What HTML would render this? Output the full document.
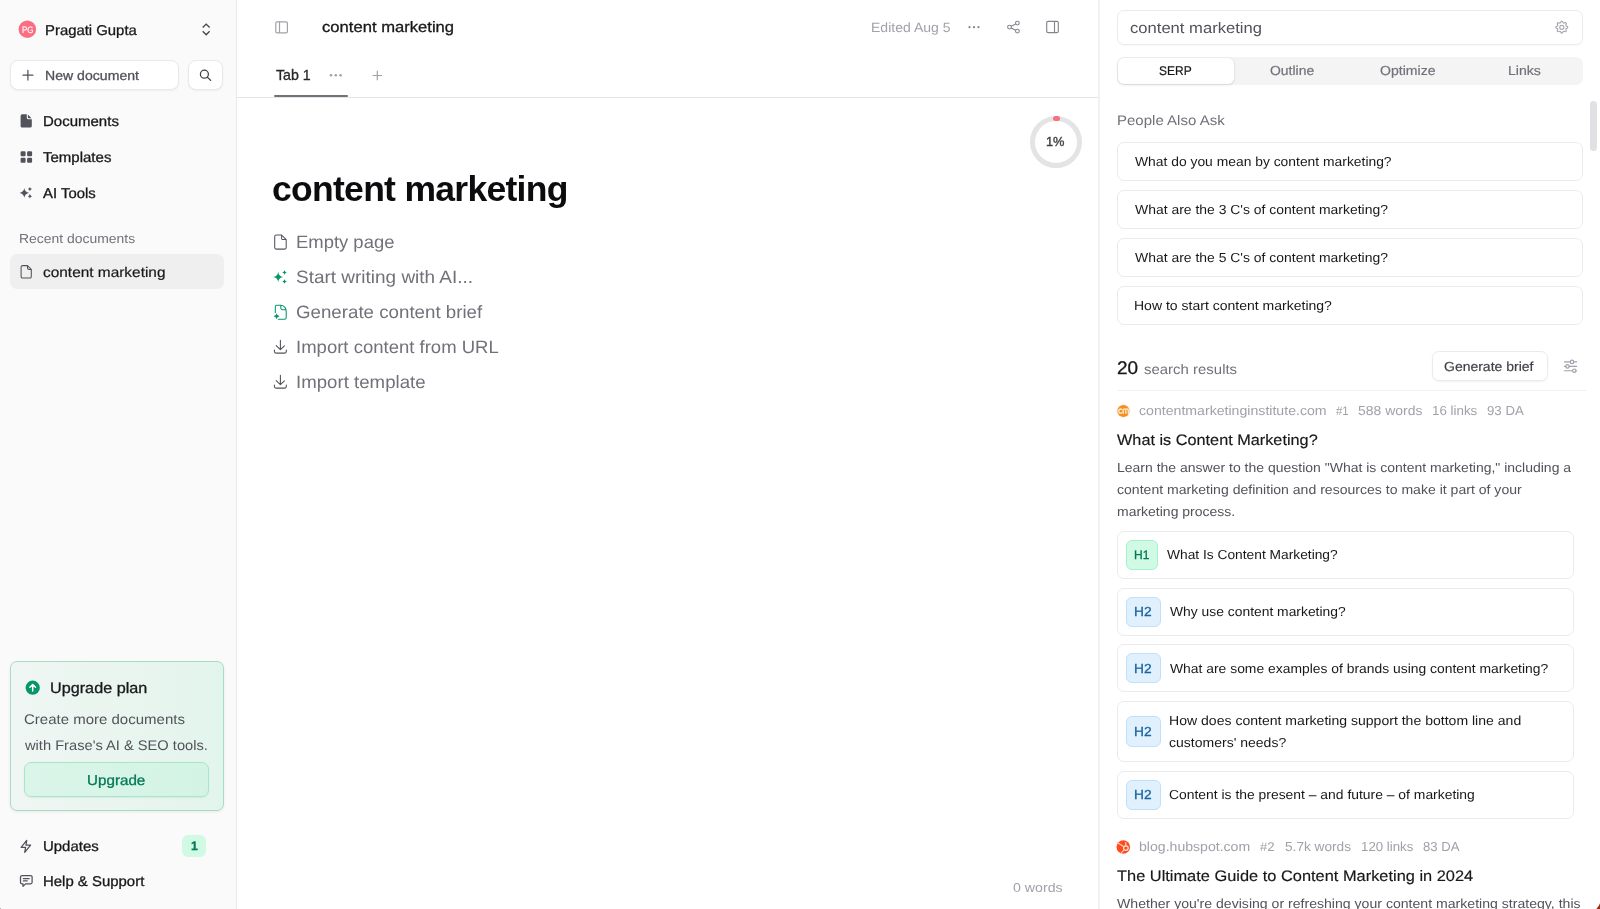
<!DOCTYPE html>
<html><head><meta charset="utf-8"><title>content marketing</title>
<style>
html,body{margin:0;padding:0;}
body{width:1600px;height:909px;overflow:hidden;background:#fff;position:relative;font-family:"Liberation Sans",sans-serif;}
.t{position:absolute;white-space:nowrap;line-height:20px;transform-origin:0 50%;}
.b{position:absolute;box-sizing:border-box;}
#ic{position:absolute;left:0;top:0;}
</style></head><body>
<div id="root" style="position:absolute;left:0;top:0;width:1600px;height:909px;overflow:hidden;will-change:transform;">
<div class="b" style="left:0px;top:0px;width:237px;height:909px;background:#fafafa;border-right:1px solid #e9e9ec;"></div>
<div class="b" style="left:10px;top:60px;width:169px;height:30px;background:#fff;border:1px solid #e9e9ec;border-radius:8px;box-shadow:0 1px 2px rgba(0,0,0,.05);"></div>
<div class="b" style="left:188px;top:60px;width:35px;height:30px;background:#fff;border:1px solid #e9e9ec;border-radius:8px;box-shadow:0 1px 2px rgba(0,0,0,.05);"></div>
<div class="b" style="left:10px;top:254px;width:213.5px;height:35px;background:#efefef;border-radius:7px;"></div>
<div class="b" style="left:10px;top:661px;width:214px;height:150px;border:1px solid #a7dcc5;border-radius:7px;background:linear-gradient(90deg,#eff6f3 0%,#e9f5ef 55%,#e2f5ec 100%);box-shadow:0 1px 3px rgba(0,0,0,.07);"></div>
<div class="b" style="left:24px;top:762px;width:185.3px;height:35px;border:1px solid #a7e6cb;border-radius:7px;background:linear-gradient(90deg,#dbf5e9 0%,#d3f4e4 100%);box-shadow:0 1px 2px rgba(0,0,0,.06);"></div>
<div class="b" style="left:182px;top:835px;width:24px;height:22px;border-radius:6px;background:#d1fae5;"></div>
<div class="b" style="left:237px;top:97px;width:861px;height:1px;background:#e4e4e7;"></div>
<div class="b" style="left:274px;top:94.6px;width:73.5px;height:2.4px;background:#71717a;border-radius:1.2px;"></div>
<div class="b" style="left:1029.8px;top:115.8px;width:52.2px;height:52.2px;border-radius:50%;border:5px solid #e4e4e7;"></div>
<div class="b" style="left:1053px;top:115.6px;width:6.6px;height:5px;border-radius:2.5px;background:#fb6f7c;"></div>
<div class="b" style="left:1098px;top:0px;width:2px;height:909px;background:#f1f1f3;"></div>
<div class="b" style="left:1117px;top:10px;width:465.5px;height:34.5px;border:1px solid #ebebee;border-radius:7px;background:#fff;box-shadow:0 1px 2px rgba(0,0,0,.03);"></div>
<div class="b" style="left:1117px;top:57px;width:465.8px;height:28px;border-radius:7px;background:#f4f4f5;"></div>
<div class="b" style="left:1118px;top:58px;width:116.4px;height:26px;border-radius:6px;background:#fff;box-shadow:0 0 0 1px rgba(0,0,0,.025),0 1px 3px rgba(0,0,0,.11);"></div>
<div class="b" style="left:1590px;top:101px;width:7px;height:50px;border-radius:3.5px;background:#e1e1e5;"></div>
<div class="b" style="left:1117px;top:142px;width:465.5px;height:38.5px;border:1px solid #ebebee;border-radius:7px;background:#fff;"></div>
<div class="b" style="left:1117px;top:190px;width:465.5px;height:38.5px;border:1px solid #ebebee;border-radius:7px;background:#fff;"></div>
<div class="b" style="left:1117px;top:238px;width:465.5px;height:38.5px;border:1px solid #ebebee;border-radius:7px;background:#fff;"></div>
<div class="b" style="left:1117px;top:286px;width:465.5px;height:38.5px;border:1px solid #ebebee;border-radius:7px;background:#fff;"></div>
<div class="b" style="left:1432px;top:351px;width:115.6px;height:30px;border:1px solid #ebebee;border-radius:7px;background:#fff;box-shadow:0 1px 2px rgba(0,0,0,.06);"></div>
<div class="b" style="left:1117px;top:390px;width:470px;height:1px;background:#f1f1f3;"></div>
<div class="b" style="left:1117px;top:531px;width:456.6px;height:48px;border:1px solid #ebebee;border-radius:7px;background:#fff;"></div>
<div class="b" style="left:1126px;top:540.2px;width:32px;height:29.6px;border-radius:6px;background:#d1fae5;border:1px solid #a7f0cf;"></div>
<div class="b" style="left:1117px;top:588px;width:456.6px;height:48px;border:1px solid #ebebee;border-radius:7px;background:#fff;"></div>
<div class="b" style="left:1126px;top:596.5px;width:34.6px;height:30px;border-radius:6px;background:#e0f1fd;border:1px solid #bfe0f8;"></div>
<div class="b" style="left:1117px;top:644px;width:456.6px;height:48px;border:1px solid #ebebee;border-radius:7px;background:#fff;"></div>
<div class="b" style="left:1126px;top:653.4px;width:34.6px;height:30px;border-radius:6px;background:#e0f1fd;border:1px solid #bfe0f8;"></div>
<div class="b" style="left:1117px;top:701px;width:456.6px;height:61px;border:1px solid #ebebee;border-radius:7px;background:#fff;"></div>
<div class="b" style="left:1126px;top:716.4px;width:34.6px;height:30.4px;border-radius:6px;background:#e0f1fd;border:1px solid #bfe0f8;"></div>
<div class="b" style="left:1117px;top:771px;width:456.6px;height:48px;border:1px solid #ebebee;border-radius:7px;background:#fff;"></div>
<div class="b" style="left:1126px;top:779.6px;width:34.6px;height:30.4px;border-radius:6px;background:#e0f1fd;border:1px solid #bfe0f8;"></div>
<svg id="ic" width="1600" height="909" viewBox="0 0 1600 909">
<circle cx="27.350" cy="29.150" r="8.750" fill="#fa6e82"/>
<path d="M202.7 27.5L206.2 24.1L209.6 27.5M202.7 31.3L206.2 34.8L209.600 31.3" fill="none" stroke="#45454f" stroke-width="1.350" stroke-linejoin="miter"/>
<path d="M27.900 70.300v9.800M23 75.200h9.900" fill="none" stroke="#52525b" stroke-width="1.250" stroke-linecap="round"/>
<circle cx="204.400" cy="74.150" r="4" fill="none" stroke="#3f3f46" stroke-width="1.250"/><path d="M207.300 77.100L210.700 80.400" stroke="#3f3f46" stroke-width="1.300" stroke-linecap="round"/>
<path fill="#52525b" d="M22.200000000000003 114.3h4.600v3.400a1.600 1.600 0 0 0 1.600 1.600h3.400v6.600a1.600 1.600 0 0 1 -1.600 1.600H22.200000000000003a1.600 1.600 0 0 1 -1.600 -1.600V115.89999999999999a1.600 1.600 0 0 1 1.600 -1.600zM27.900000000000002 114.6L31.5 118.2H28.700000000000003a.800 .800 0 0 1 -.800 -.800z"/>
<rect x="20.6" y="151.3" width="5" height="5" rx="1.100" fill="#52525b"/>
<rect x="20.6" y="157.8" width="5" height="5" rx="1.100" fill="#52525b"/>
<rect x="27.1" y="151.3" width="5" height="5" rx="1.100" fill="#52525b"/>
<rect x="27.1" y="157.8" width="5" height="5" rx="1.100" fill="#52525b"/>
<path fill="#52525b" d="M24.30 188.10Q24.88 192.32 29.10 192.90Q24.88 193.48 24.30 197.70Q23.72 193.48 19.50 192.90Q23.72 192.32 24.30 188.10ZM29.90 187.00Q30.32 188.68 32.00 189.10Q30.32 189.52 29.90 191.20Q29.48 189.52 27.80 189.10Q29.48 188.68 29.90 187.00ZM29.90 194.10Q30.34 195.86 32.10 196.30Q30.34 196.74 29.90 198.50Q29.46 196.74 27.70 196.30Q29.46 195.86 29.90 194.10Z"/>
<path d="M22.50 265.60H27.50L31.30 269.40V276.60a1.4 1.4 0 0 1 -1.4 1.4H22.50a1.4 1.4 0 0 1 -1.4 -1.4V267.00a1.4 1.4 0 0 1 1.4 -1.4ZM27.50 265.80v2.20a1.4 1.4 0 0 0 1.4 1.4h2.20" fill="none" stroke="#52525b" stroke-width="1.050" stroke-linejoin="round"/>
<circle cx="32.7" cy="687.700" r="7.150" fill="#059669"/><path d="M32.7 691.100V684.700M29.900 687.300L32.700 684.500L35.500 687.300" fill="none" stroke="#fff" stroke-width="1.500" stroke-linecap="round" stroke-linejoin="round"/>
<path d="M26.700000000000003 840.3000000000001L21.1 847.3000000000001h4.500l-.900 5l5.900 -7.200H26.0z" fill="none" stroke="#52525b" stroke-width="1.250" stroke-linejoin="round"/>
<path d="M22.1 875.5h8.400a1.600 1.600 0 0 1 1.600 1.600v5.200a1.600 1.600 0 0 1 -1.600 1.600H25.5L23.0 886.4V883.9H22.1a1.600 1.600 0 0 1 -1.600 -1.600V877.0999999999999a1.600 1.600 0 0 1 1.600 -1.600zM23.400000000000002 878.5h5.800M23.400000000000002 880.9h3.800" fill="none" stroke="#52525b" stroke-width="1.250" stroke-linejoin="round" stroke-linecap="round"/>
<rect x="275.8" y="21.800" width="11.600" height="11" rx="1.300" fill="none" stroke="#a1a1aa" stroke-width="1.200"/><path d="M279.500 21.800v11" stroke="#a1a1aa" stroke-width="1.200"/>
<circle cx="969.5" cy="27.200" r="1.100" fill="#85858f"/>
<circle cx="974" cy="27.200" r="1.100" fill="#85858f"/>
<circle cx="978.5" cy="27.200" r="1.100" fill="#85858f"/>
<g fill="none" stroke="#85858f" stroke-width="1.100"><circle cx="1009.500" cy="27.100" r="1.900"/><circle cx="1017.400" cy="23.100" r="1.900"/><circle cx="1017.400" cy="31.100" r="1.900"/><path d="M1011.200 26.250L1015.700 23.950M1011.200 27.950L1015.700 30.250"/></g>
<rect x="1046.700" y="21.400" width="11.600" height="11.200" rx="1.400" fill="none" stroke="#85858f" stroke-width="1.150"/><path d="M1054.500 21.400v11.200" stroke="#85858f" stroke-width="1.150"/>
<circle cx="331" cy="75.200" r="1.300" fill="#a1a1aa"/>
<circle cx="335.8" cy="75.200" r="1.300" fill="#a1a1aa"/>
<circle cx="340.6" cy="75.200" r="1.300" fill="#a1a1aa"/>
<path d="M377.300 71.200v8.600M373 75.500h8.600" fill="none" stroke="#a1a1aa" stroke-width="1.200" stroke-linecap="round"/>
<path d="M276.30 235.00H281.60L286.20 239.60V247.50a1.6 1.6 0 0 1 -1.6 1.6H276.30a1.6 1.6 0 0 1 -1.6 -1.6V236.60a1.6 1.6 0 0 1 1.6 -1.6ZM281.60 235.20v3.00a1.4 1.4 0 0 0 1.4 1.4h3.00" fill="none" stroke="#52525b" stroke-width="1.050" stroke-linejoin="round"/>
<path fill="#059669" d="M278.20 271.90Q278.80 276.30 283.20 276.90Q278.80 277.50 278.20 281.90Q277.60 277.50 273.20 276.90Q277.60 276.30 278.20 271.90ZM284.50 270.30Q284.94 272.06 286.70 272.50Q284.94 272.94 284.50 274.70Q284.06 272.94 282.30 272.50Q284.06 272.06 284.50 270.30ZM284.50 279.15Q284.95 280.95 286.75 281.40Q284.95 281.85 284.50 283.65Q284.05 281.85 282.25 281.40Q284.05 280.95 284.50 279.15Z"/>
<path d="M275.300 312.400V306.900a1.600 1.600 0 0 1 1.600 -1.600h3.700c3 0 5.600 2.500 5.600 5.600V317.700a1.600 1.600 0 0 1 -1.600 1.600H278.300M280.800 305.500v2.600a1.600 1.600 0 0 0 1.600 1.600h2.800" fill="none" stroke="#059669" stroke-width="1.080" stroke-linecap="round" stroke-linejoin="round"/><path fill="#059669" d="M276.60 313.30Q277.05 315.85 279.60 316.30Q277.05 316.75 276.60 319.30Q276.15 316.75 273.60 316.30Q276.15 315.85 276.60 313.30Z"/>
<path d="M280.40 340.30V349.50M276.20 345.60L280.40 349.70L284.40 345.80M274.40 350.10v1.4a1.6 1.6 0 0 0 1.6 1.6h8.7a1.6 1.6 0 0 0 1.6 -1.6v-1.4" fill="none" stroke="#52525b" stroke-width="1.080" stroke-linejoin="round" stroke-linecap="round"/>
<path d="M280.40 375.30V384.50M276.20 380.60L280.40 384.70L284.40 380.80M274.40 385.10v1.4a1.6 1.6 0 0 0 1.6 1.6h8.7a1.6 1.6 0 0 0 1.6 -1.6v-1.4" fill="none" stroke="#52525b" stroke-width="1.080" stroke-linejoin="round" stroke-linecap="round"/>
<path d="M1561.80 21.28L1562.38 21.31L1562.82 22.08L1563.11 22.88L1563.53 23.03L1563.93 23.22L1564.70 22.86L1565.56 22.62L1565.99 23.01L1566.38 23.44L1566.14 24.30L1565.78 25.07L1565.97 25.47L1566.12 25.89L1566.92 26.18L1567.69 26.62L1567.72 27.20L1567.69 27.78L1566.92 28.22L1566.12 28.51L1565.97 28.93L1565.78 29.33L1566.14 30.10L1566.38 30.96L1565.99 31.39L1565.56 31.78L1564.70 31.54L1563.93 31.18L1563.53 31.37L1563.11 31.52L1562.82 32.32L1562.38 33.09L1561.80 33.12L1561.22 33.09L1560.78 32.32L1560.49 31.52L1560.07 31.37L1559.67 31.18L1558.90 31.54L1558.04 31.78L1557.61 31.39L1557.22 30.96L1557.46 30.10L1557.82 29.33L1557.63 28.93L1557.48 28.51L1556.68 28.22L1555.91 27.78L1555.88 27.20L1555.91 26.62L1556.68 26.18L1557.48 25.89L1557.63 25.47L1557.82 25.07L1557.46 24.30L1557.22 23.44L1557.61 23.01L1558.04 22.62L1558.90 22.86L1559.67 23.22L1560.07 23.03L1560.49 22.88L1560.78 22.08L1561.22 21.31Z" fill="none" stroke="#a1a1aa" stroke-width="1.050" stroke-linejoin="round"/><circle cx="1561.800" cy="27.200" r="2.050" fill="none" stroke="#a1a1aa" stroke-width="1.050"/>
<g fill="none" stroke="#a1a1aa" stroke-width="1.150" stroke-linecap="round"><path d="M1564.400 361.900h5.800M1573.800 361.900h2.800M1564.400 366.400h1.300M1569.300 366.400h7.300M1564.400 370.700h8.100M1576.100 370.700h.5"/><circle cx="1572" cy="361.900" r="1.700"/><circle cx="1567.500" cy="366.400" r="1.700"/><circle cx="1574.300" cy="370.700" r="1.700"/></g>
<circle cx="1123.400" cy="411" r="6.500" fill="none" stroke="#e3e6ea" stroke-width=".6"/><circle cx="1123.400" cy="411" r="6.050" fill="#f7901a"/><path d="M1121.900 409.500a2 2 0 1 0 0 3.200M1123.300 413.300V410.100a1.250 1.250 0 0 1 2.500 0v3.200M1125.800 410.100a1.250 1.250 0 0 1 2.500 0v3.200" fill="none" stroke="#fdebd6" stroke-width="1.300" stroke-linecap="round"/>
<circle cx="1123.300" cy="847" r="6.800" fill="#ff4a1c"/><g fill="none" stroke="#fff" stroke-linecap="round"><circle cx="1125.900" cy="848.100" r="2.300" stroke-width="1.150" stroke="#ffe3db"/><path d="M1125.800 845.700V842.500" stroke-width="1.100" stroke="#ffe3db"/><path d="M1124 846.700L1117.200 842.500" stroke-width="1.050" stroke="#ffd0c4"/><path d="M1124.200 849.900L1120.700 853.300" stroke-width="1.050" stroke="#ffd0c4"/></g>
<path d="M0 907.600Q.300 908.700 1.300 909H0Z" fill="#85858d"/>
<path d="M1595.600 909.500Q1599.300 907 1600.500 901.500V909.500Z" fill="#a3260d"/>
</svg>
<span class="t" style="left:21.60px;top:20.12px;font-size:9.31px;color:#ffffff;transform:matrix(0.8558,0,0.0005,1,0,0);-webkit-text-stroke:0.15px #ffffff;">PG</span>
<span class="t" style="left:44.70px;top:20.12px;font-size:14.16px;color:#18181b;transform:matrix(1.0508,0,0.0005,1,0,0);-webkit-text-stroke:0.3px #18181b;">Pragati Gupta</span>
<span class="t" style="left:44.70px;top:66.12px;font-size:13.09px;color:#52525b;transform:matrix(1.0776,0,0.0005,1,0,0);-webkit-text-stroke:0.3px #52525b;">New document</span>
<span class="t" style="left:42.90px;top:111.12px;font-size:14.16px;color:#18181b;transform:matrix(1.0599,0,0.0005,1,0,0);-webkit-text-stroke:0.3px #18181b;">Documents</span>
<span class="t" style="left:43.40px;top:147.12px;font-size:14.16px;color:#18181b;transform:matrix(1.0600,0,0.0005,1,0,0);-webkit-text-stroke:0.3px #18181b;">Templates</span>
<span class="t" style="left:43.40px;top:183.12px;font-size:14.16px;color:#18181b;transform:matrix(1.0517,0,0.0005,1,0,0);-webkit-text-stroke:0.3px #18181b;">AI Tools</span>
<span class="t" style="left:18.70px;top:229.12px;font-size:13.09px;color:#71717a;transform:matrix(1.0656,0,0.0005,1,0,0);">Recent documents</span>
<span class="t" style="left:43.00px;top:262.12px;font-size:14.16px;color:#18181b;transform:matrix(1.0886,0,0.0005,1,0,0);-webkit-text-stroke:0.2px #18181b;">content marketing</span>
<span class="t" style="left:50.20px;top:678.12px;font-size:15.13px;color:#18181b;transform:matrix(1.0713,0,0.0005,1,0,0);-webkit-text-stroke:0.3px #18181b;">Upgrade plan</span>
<span class="t" style="left:24.20px;top:709.12px;font-size:13.97px;color:#52525b;transform:matrix(1.0738,0,0.0005,1,0,0);">Create more documents</span>
<span class="t" style="left:24.60px;top:735.12px;font-size:13.97px;color:#52525b;transform:matrix(1.0497,0,0.0005,1,0,0);">with Frase's AI &amp; SEO tools.</span>
<span class="t" style="left:87.20px;top:770.12px;font-size:14.16px;color:#047857;transform:matrix(1.0734,0,0.0005,1,0,0);-webkit-text-stroke:0.3px #047857;">Upgrade</span>
<span class="t" style="left:43.00px;top:836.12px;font-size:14.16px;color:#18181b;transform:matrix(1.0562,0,0.0005,1,0,0);-webkit-text-stroke:0.3px #18181b;">Updates</span>
<span class="t" style="left:190.50px;top:836.12px;font-size:12.42px;color:#047857;font-weight:700;transform:matrix(1.0000,0,0.0005,1,0,0);-webkit-text-stroke:0.25px #047857;">1</span>
<span class="t" style="left:43.00px;top:871.12px;font-size:14.16px;color:#18181b;transform:matrix(1.0550,0,0.0005,1,0,0);-webkit-text-stroke:0.3px #18181b;">Help &amp; Support</span>
<span class="t" style="left:322.20px;top:17.12px;font-size:15.13px;color:#18181b;transform:matrix(1.0987,0,0.0005,1,0,0);-webkit-text-stroke:0.3px #18181b;">content marketing</span>
<span class="t" style="left:871.00px;top:18.12px;font-size:13.39px;color:#a1a1aa;transform:matrix(1.0493,0,0.0005,1,0,0);">Edited Aug 5</span>
<span class="t" style="left:276.30px;top:65.12px;font-size:14.16px;color:#27272a;transform:matrix(1.0017,0,0.0005,1,0,0);-webkit-text-stroke:0.3px #27272a;">Tab 1</span>
<span class="t" style="left:1045.80px;top:132.12px;font-size:13.0px;color:#3f3f46;transform:matrix(0.9842,0,0.0005,1,0,0);-webkit-text-stroke:0.4px #3f3f46;">1%</span>
<span class="t" style="left:271.80px;top:179.12px;font-size:35.5px;color:#0c0c0f;font-weight:700;letter-spacing:-0.707px;transform:matrix(1.0000,0,0.0005,1,0,0);">content marketing</span>
<span class="t" style="left:295.70px;top:232.12px;font-size:17.85px;color:#71717a;transform:matrix(1.0332,0,0.0005,1,0,0);">Empty page</span>
<span class="t" style="left:295.70px;top:267.12px;font-size:17.85px;color:#71717a;transform:matrix(1.0630,0,0.0005,1,0,0);">Start writing with AI...</span>
<span class="t" style="left:295.70px;top:302.12px;font-size:17.85px;color:#71717a;transform:matrix(1.0486,0,0.0005,1,0,0);">Generate content brief</span>
<span class="t" style="left:295.70px;top:337.12px;font-size:17.85px;color:#71717a;transform:matrix(1.0381,0,0.0005,1,0,0);">Import content from URL</span>
<span class="t" style="left:295.70px;top:372.12px;font-size:17.85px;color:#71717a;transform:matrix(1.0454,0,0.0005,1,0,0);">Import template</span>
<span class="t" style="left:1013.40px;top:878.12px;font-size:13.09px;color:#a1a1aa;transform:matrix(1.0830,0,0.0005,1,0,0);">0 words</span>
<span class="t" style="left:1130.20px;top:18.12px;font-size:15.13px;color:#52525b;transform:matrix(1.0979,0,0.0005,1,0,0);">content marketing</span>
<span class="t" style="left:1159.20px;top:61.12px;font-size:12.61px;color:#18181b;transform:matrix(0.9521,0,0.0005,1,0,0);-webkit-text-stroke:0.2px #18181b;">SERP</span>
<span class="t" style="left:1270.20px;top:61.12px;font-size:13.09px;color:#71717a;transform:matrix(1.0663,0,0.0005,1,0,0);-webkit-text-stroke:0.2px #71717a;">Outline</span>
<span class="t" style="left:1380.40px;top:61.12px;font-size:13.09px;color:#71717a;transform:matrix(1.0754,0,0.0005,1,0,0);-webkit-text-stroke:0.2px #71717a;">Optimize</span>
<span class="t" style="left:1507.70px;top:61.12px;font-size:13.09px;color:#71717a;transform:matrix(1.0776,0,0.0005,1,0,0);-webkit-text-stroke:0.2px #71717a;">Links</span>
<span class="t" style="left:1116.70px;top:110.12px;font-size:13.97px;color:#71717a;transform:matrix(1.0750,0,0.0005,1,0,0);">People Also Ask</span>
<span class="t" style="left:1134.60px;top:152.12px;font-size:13.09px;color:#18181b;transform:matrix(1.0599,0,0.0005,1,0,0);">What do you mean by content marketing?</span>
<span class="t" style="left:1134.60px;top:200.12px;font-size:13.09px;color:#18181b;transform:matrix(1.0658,0,0.0005,1,0,0);">What are the 3 C's of content marketing?</span>
<span class="t" style="left:1134.60px;top:248.12px;font-size:13.09px;color:#18181b;transform:matrix(1.0658,0,0.0005,1,0,0);">What are the 5 C's of content marketing?</span>
<span class="t" style="left:1134.00px;top:296.12px;font-size:13.09px;color:#18181b;transform:matrix(1.0718,0,0.0005,1,0,0);">How to start content marketing?</span>
<span class="t" style="left:1117.00px;top:358.12px;font-size:18.24px;color:#18181b;transform:matrix(1.0396,0,0.0005,1,0,0);-webkit-text-stroke:0.3px #18181b;">20</span>
<span class="t" style="left:1143.80px;top:359.12px;font-size:13.97px;color:#71717a;transform:matrix(1.0707,0,0.0005,1,0,0);">search results</span>
<span class="t" style="left:1444.40px;top:357.12px;font-size:13.09px;color:#3f3f46;transform:matrix(1.0693,0,0.0005,1,0,0);-webkit-text-stroke:0.2px #3f3f46;">Generate brief</span>
<span class="t" style="left:1139.00px;top:401.12px;font-size:13.09px;color:#a1a1aa;transform:matrix(1.0798,0,0.0005,1,0,0);">contentmarketinginstitute.com</span>
<span class="t" style="left:1336.30px;top:401.12px;font-size:12.42px;color:#a1a1aa;transform:matrix(0.9195,0,0.0005,1,0,0);">#1</span>
<span class="t" style="left:1358.40px;top:401.12px;font-size:13.09px;color:#a1a1aa;transform:matrix(1.0672,0,0.0005,1,0,0);">588 words</span>
<span class="t" style="left:1431.90px;top:401.12px;font-size:13.09px;color:#a1a1aa;transform:matrix(1.0216,0,0.0005,1,0,0);">16 links</span>
<span class="t" style="left:1486.60px;top:401.12px;font-size:13.09px;color:#a1a1aa;transform:matrix(1.0121,0,0.0005,1,0,0);">93 DA</span>
<span class="t" style="left:1117.40px;top:430.12px;font-size:15.13px;color:#18181b;transform:matrix(1.0753,0,0.0005,1,0,0);-webkit-text-stroke:0.17px #18181b;">What is Content Marketing?</span>
<span class="t" style="left:1116.80px;top:458.12px;font-size:13.09px;color:#52525b;transform:matrix(1.0700,0,0.0005,1,0,0);">Learn the answer to the question "What is content marketing," including a</span>
<span class="t" style="left:1117.20px;top:480.12px;font-size:13.09px;color:#52525b;transform:matrix(1.0747,0,0.0005,1,0,0);">content marketing definition and resources to make it part of your</span>
<span class="t" style="left:1116.80px;top:502.12px;font-size:13.09px;color:#52525b;transform:matrix(1.0698,0,0.0005,1,0,0);">marketing process.</span>
<span class="t" style="left:1134.00px;top:545.12px;font-size:12.42px;color:#047857;transform:matrix(0.9710,0,0.0005,1,0,0);-webkit-text-stroke:0.3px #047857;">H1</span>
<span class="t" style="left:1167.40px;top:545.12px;font-size:13.09px;color:#18181b;transform:matrix(1.0530,0,0.0005,1,0,0);">What Is Content Marketing?</span>
<span class="t" style="left:1134.00px;top:602.12px;font-size:13.09px;color:#1a63a0;transform:matrix(1.0527,0,0.0005,1,0,0);-webkit-text-stroke:0.3px #1a63a0;">H2</span>
<span class="t" style="left:1169.60px;top:602.12px;font-size:13.09px;color:#18181b;transform:matrix(1.0600,0,0.0005,1,0,0);">Why use content marketing?</span>
<span class="t" style="left:1134.00px;top:659.12px;font-size:13.09px;color:#1a63a0;transform:matrix(1.0527,0,0.0005,1,0,0);-webkit-text-stroke:0.3px #1a63a0;">H2</span>
<span class="t" style="left:1169.60px;top:659.12px;font-size:13.09px;color:#18181b;transform:matrix(1.0618,0,0.0005,1,0,0);">What are some examples of brands using content marketing?</span>
<span class="t" style="left:1134.00px;top:722.12px;font-size:13.09px;color:#1a63a0;transform:matrix(1.0527,0,0.0005,1,0,0);-webkit-text-stroke:0.3px #1a63a0;">H2</span>
<span class="t" style="left:1169.00px;top:711.12px;font-size:13.09px;color:#18181b;transform:matrix(1.0742,0,0.0005,1,0,0);">How does content marketing support the bottom line and</span>
<span class="t" style="left:1169.40px;top:733.12px;font-size:13.09px;color:#18181b;transform:matrix(1.0717,0,0.0005,1,0,0);">customers' needs?</span>
<span class="t" style="left:1134.00px;top:785.12px;font-size:13.09px;color:#1a63a0;transform:matrix(1.0527,0,0.0005,1,0,0);-webkit-text-stroke:0.3px #1a63a0;">H2</span>
<span class="t" style="left:1169.20px;top:785.12px;font-size:13.09px;color:#18181b;transform:matrix(1.0622,0,0.0005,1,0,0);">Content is the present – and future – of marketing</span>
<span class="t" style="left:1138.80px;top:837.12px;font-size:13.09px;color:#a1a1aa;transform:matrix(1.0770,0,0.0005,1,0,0);">blog.hubspot.com</span>
<span class="t" style="left:1259.80px;top:837.12px;font-size:12.61px;color:#a1a1aa;transform:matrix(1.0405,0,0.0005,1,0,0);">#2</span>
<span class="t" style="left:1285.00px;top:837.12px;font-size:13.09px;color:#a1a1aa;transform:matrix(1.0435,0,0.0005,1,0,0);">5.7k words</span>
<span class="t" style="left:1360.60px;top:837.12px;font-size:13.09px;color:#a1a1aa;transform:matrix(1.0150,0,0.0005,1,0,0);">120 links</span>
<span class="t" style="left:1423.40px;top:837.12px;font-size:13.09px;color:#a1a1aa;transform:matrix(1.0066,0,0.0005,1,0,0);">83 DA</span>
<span class="t" style="left:1117.20px;top:866.12px;font-size:15.13px;color:#18181b;transform:matrix(1.0835,0,0.0005,1,0,0);-webkit-text-stroke:0.17px #18181b;">The Ultimate Guide to Content Marketing in 2024</span>
<span class="t" style="left:1117.00px;top:894.12px;font-size:13.09px;color:#52525b;transform:matrix(1.0771,0,0.0005,1,0,0);">Whether you're devising or refreshing your content marketing strategy, this</span>
</div>
</body></html>
